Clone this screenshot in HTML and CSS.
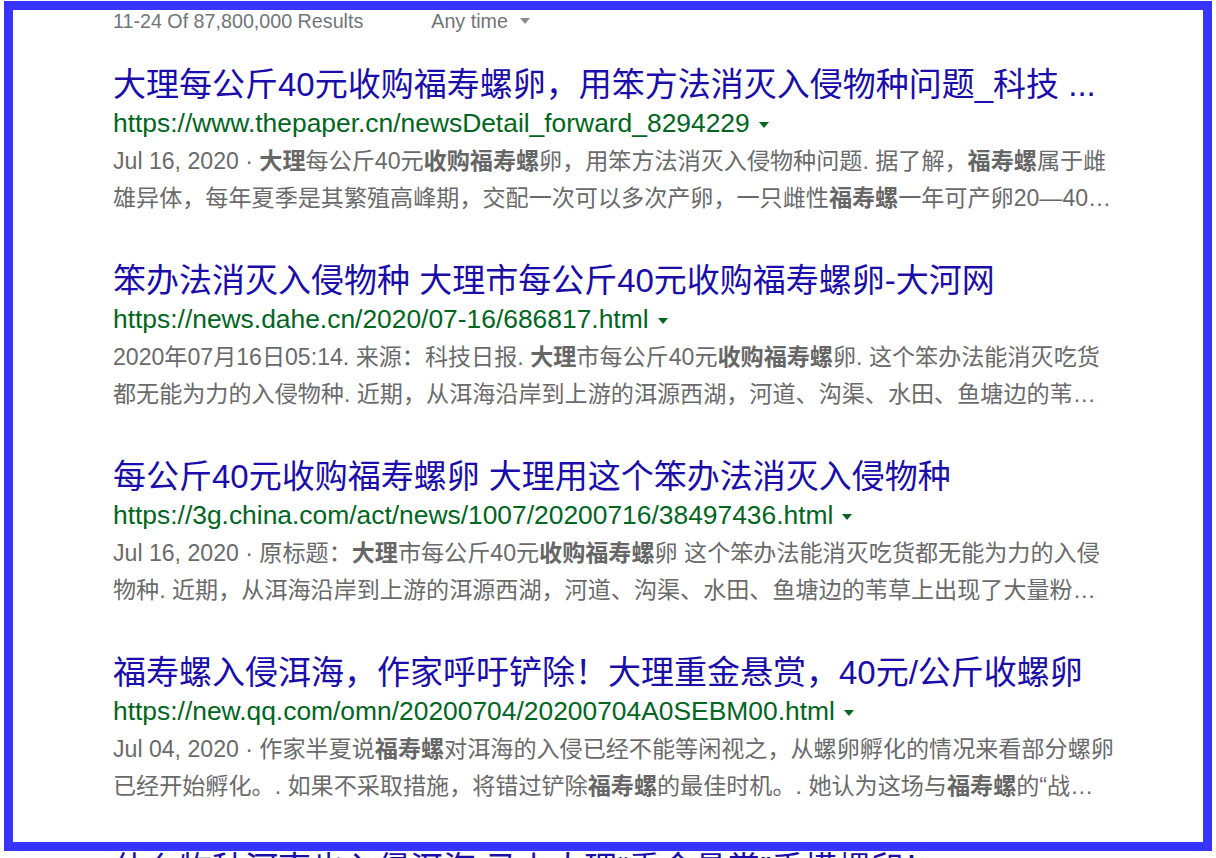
FILE: index.html
```html
<!DOCTYPE html>
<html lang="zh-CN">
<head>
    <meta charset="UTF-8">
    <meta name="viewport" content="width=device-width, initial-scale=1.0">
    <title>福寿螺 - Search results</title>
    <link rel="stylesheet" href="styles.css">
</head>
<body>
    <main class="results">
        <div class="result-stats">
            <span>11-24 Of 87,800,000 Results</span>
            <span class="time-filter">Any time <span class="caret"></span></span>
        </div>

        <div class="result">
            <a class="result-title" href="#">大理每公斤40元收购福寿螺卵，用笨方法消灭入侵物种问题_科技 ...</a>
            <div class="result-url">https://www.thepaper.cn/newsDetail_forward_8294229 <span class="caret"></span></div>
            <p class="snippet">Jul 16, 2020 · <b>大理</b>每公斤40元<b>收购福寿螺</b>卵，用笨方法消灭入侵物种问题. 据了解，<b>福寿螺</b>属于雌<br>雄异体，每年夏季是其繁殖高峰期，交配一次可以多次产卵，一只雌性<b>福寿螺</b>一年可产卵20—40…</p>
        </div>

        <div class="result">
            <a class="result-title" href="#">笨办法消灭入侵物种 大理市每公斤40元收购福寿螺卵-大河网</a>
            <div class="result-url">https://news.dahe.cn/2020/07-16/686817.html <span class="caret"></span></div>
            <p class="snippet">2020年07月16日05:14. 来源：科技日报. <b>大理</b>市每公斤40元<b>收购福寿螺</b>卵. 这个笨办法能消灭吃货<br>都无能为力的入侵物种. 近期，从洱海沿岸到上游的洱源西湖，河道、沟渠、水田、鱼塘边的苇…</p>
        </div>

        <div class="result">
            <a class="result-title" href="#">每公斤40元收购福寿螺卵 大理用这个笨办法消灭入侵物种</a>
            <div class="result-url">https://3g.china.com/act/news/1007/20200716/38497436.html <span class="caret"></span></div>
            <p class="snippet">Jul 16, 2020 · 原标题：<b>大理</b>市每公斤40元<b>收购福寿螺</b>卵 这个笨办法能消灭吃货都无能为力的入侵<br>物种. 近期，从洱海沿岸到上游的洱源西湖，河道、沟渠、水田、鱼塘边的苇草上出现了大量粉…</p>
        </div>

        <div class="result">
            <a class="result-title" href="#">福寿螺入侵洱海，作家呼吁铲除！大理重金悬赏，40元/公斤收螺卵</a>
            <div class="result-url">https://new.qq.com/omn/20200704/20200704A0SEBM00.html <span class="caret"></span></div>
            <p class="snippet">Jul 04, 2020 · 作家半夏说<b>福寿螺</b>对洱海的入侵已经不能等闲视之，从螺卵孵化的情况来看部分螺卵<br>已经开始孵化。. 如果不采取措施，将错过铲除<b>福寿螺</b>的最佳时机。. 她认为这场与<b>福寿螺</b>的“战…</p>
        </div>

        <div class="result">
            <a class="result-title" href="#">什么物种河南也入侵洱海 马上大理“重金悬赏”手摸螺卵！</a>
        </div>
    </main>

    <!-- highlight frame drawn over the results -->
    <div class="highlight"></div>
</body>
</html>
```

FILE: styles.css
```css
* {
    margin: 0;
    padding: 0;
    box-sizing: border-box;
}

html, body {
    overflow: hidden;
}

body {
    font-family: "Liberation Sans", Arial, "Noto Sans CJK SC", sans-serif;
    background-color: #fff;
    color: #545454;
    height: 858px;
}

.results {
    padding: 8px 0 0 113px;
}

.result-stats {
    display: flex;
    align-items: center;
    gap: 68px;
    font-size: 19.7px;
    line-height: 26px;
    color: #70757a;
    margin-bottom: 31px;
}

.time-filter {
    display: flex;
    align-items: center;
    gap: 12px;
}

.caret {
    display: inline-block;
    width: 0;
    height: 0;
    border-left: 5px solid transparent;
    border-right: 5px solid transparent;
    border-top: 6px solid #8a8d91;
}

.result {
    margin-bottom: 44px;
}

.result-title {
    display: block;
    font-size: 33px;
    line-height: 40px;
    color: #1a0dab;
    text-decoration: none;
    white-space: nowrap;
}

.result-url {
    display: flex;
    align-items: center;
    gap: 9px;
    font-size: 26.4px;
    line-height: 36px;
    color: #006621;
    white-space: nowrap;
}

.result-url .caret {
    border-top-color: #006621;
    margin-top: 3px;
}

.snippet {
    padding-top: 2px;
    font-size: 23.1px;
    line-height: 37px;
    color: #6a6a6a;
    white-space: nowrap;
}

.snippet b {
    color: #666;
}

.highlight {
    position: absolute;
    top: 1px;
    left: 4px;
    width: 1208px;
    height: 850px;
    border: 9px solid #3535ff;
}
```
